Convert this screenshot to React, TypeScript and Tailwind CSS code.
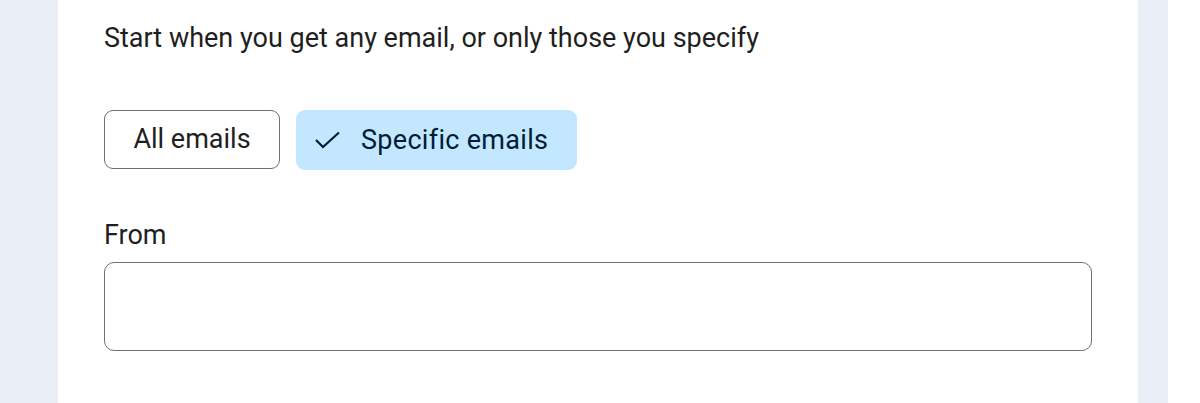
import React from "react";

export default function App() {
  return (
    <div
      className="flex h-[403px] w-[1200px] overflow-hidden bg-[#e9eef6]"
      style={{ fontFamily: "Roboto, 'Noto Sans', sans-serif" }}
    >
      <div className="w-[58px] shrink-0" />
      <div className="flex w-[1080px] shrink-0 flex-col bg-white pl-[46px] pr-[46px] pt-[22px]">
        <p className="text-[27px] leading-[32px] text-[#1f1f1f]">
          Start when you get any email, or only those you specify
        </p>
        <div className="mt-[56px] flex gap-[16px]">
          <button className="flex h-[59px] w-[176px] items-center justify-center rounded-[9px] border border-[#6f7170] bg-white text-[27px] text-[#1f1f1f]">
            All emails
          </button>
          <button className="flex h-[60px] w-[281px] items-center rounded-[9px] bg-[#c2e7ff] pl-[16px] text-[27px] tracking-[0.3px] text-[#001d35]">
            <svg width="28" height="24" viewBox="0 0 28 24" className="mr-[21px]">
              <path d="M4 12l7 7L27 4.5" fill="none" stroke="#001d35" strokeWidth="2.2" />
            </svg>
            Specific emails
          </button>
        </div>
        <label className="mt-[49px] text-[27px] leading-[32px] text-[#1f1f1f]">From</label>
        <div className="mt-[11px] h-[89px] w-[988px] rounded-[10px] border border-[#6f7170] bg-white" />
      </div>
      <div className="w-[30px] shrink-0" />
      <div className="flex-1 bg-white" />
    </div>
  );
}
